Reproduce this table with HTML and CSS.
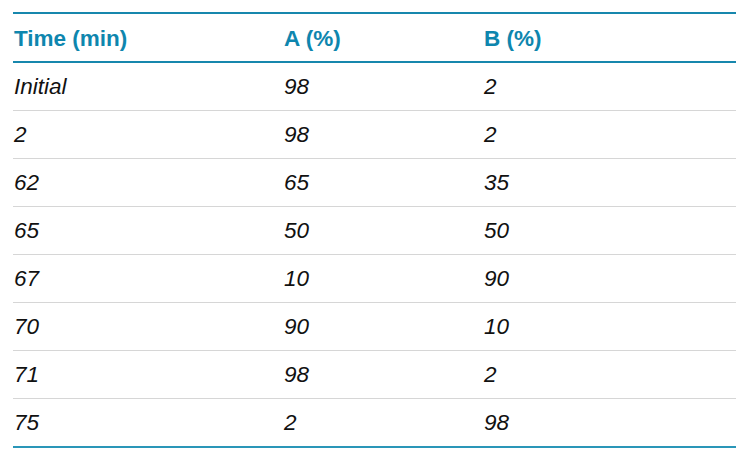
FILE: index.html
```html
<!DOCTYPE html>
<html lang="en">
<head>
<meta charset="utf-8">
<link rel="stylesheet" href="styles.css">
</head>
<body>
<div class="wrap">
<table class="grad">
<colgroup><col class="c1"><col class="c2"><col class="c3"></colgroup>
<thead>
<tr><th>Time (min)</th><th>A (%)</th><th>B (%)</th></tr>
</thead>
<tbody>
<tr><td>Initial</td><td>98</td><td>2</td></tr>
<tr><td>2</td><td>98</td><td>2</td></tr>
<tr><td>62</td><td>65</td><td>35</td></tr>
<tr><td>65</td><td>50</td><td>50</td></tr>
<tr><td>67</td><td>10</td><td>90</td></tr>
<tr><td>70</td><td>90</td><td>10</td></tr>
<tr><td>71</td><td>98</td><td>2</td></tr>
<tr><td>75</td><td>2</td><td>98</td></tr>
</tbody>
</table>
</div>
</body>
</html>
```
FILE: styles.css
```css
html, body { margin: 0; padding: 0; background: #fff; }
.wrap { padding: 12px 14px 0 13px; }
.grad {
  width: 723px;
  border-collapse: collapse;
  table-layout: fixed;
  font-family: "Liberation Sans", Arial, sans-serif;
  font-size: 22.5px;
}
.c1 { width: 270px; }
.c2 { width: 200px; }
.grad th {
  text-align: left;
  color: #0e86ae;
  font-weight: bold;
  height: 45px;
  padding: 2px 0 0 1px;
  border-top: 2px solid #1787ad;
  border-bottom: 2px solid #1787ad;
  vertical-align: middle;
}
.grad td {
  font-style: italic;
  color: #111;
  height: 46px;
  padding: 1px 0 0 1px;
  border-bottom: 1px solid #d6d6d6;
  vertical-align: middle;
}
.grad tbody tr:last-child td { border-bottom: 2px solid #2a96b8; }
```
